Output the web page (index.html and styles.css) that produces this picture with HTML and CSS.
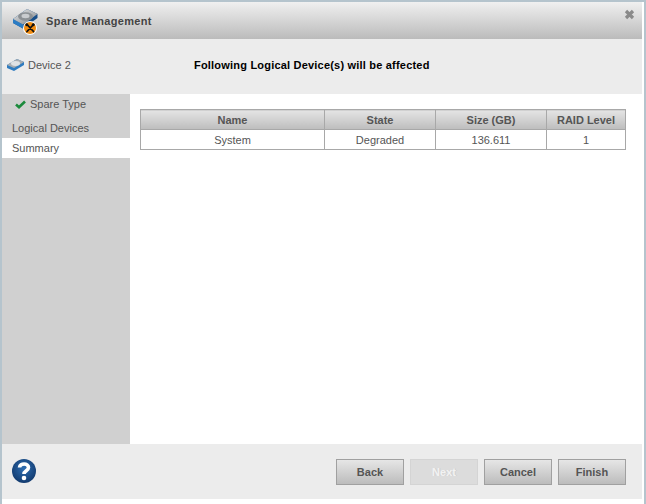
FILE: index.html
```html
<!DOCTYPE html>
<html lang="en">
<head>
<meta charset="utf-8">
<title>Spare Management</title>
<link rel="stylesheet" href="styles.css">
</head>
<body>
<div class="dialog">
  <header class="titlebar">
    <svg class="title-icon" width="25" height="26" viewBox="0 0 25 26">
      <defs>
        <linearGradient id="disk" x1="0" y1="0" x2="1" y2="1">
          <stop offset="0" stop-color="#e8eaec"/>
          <stop offset="1" stop-color="#7f8488"/>
        </linearGradient>
      </defs>
      <path d="M0 10 L14 0 L24.500 5 L24.500 9 L10 19.500 L0 14 Z" fill="#174f8a"/>
      <path d="M0 10 L10 15.500 L10 19.500 L0 14 Z" fill="#2b7cc4"/>
      <path d="M0 10 L14 0 L24.500 5 L10 15.500 Z" fill="url(#disk)"/>
      <ellipse cx="12.500" cy="7.500" rx="7.500" ry="4.200" fill="#8b9094"/>
      <ellipse cx="12.500" cy="7" rx="4" ry="2.200" fill="#c9cccf"/>
      <circle cx="17" cy="19" r="7" fill="#fff"/>
      <circle cx="17" cy="19" r="6" fill="#f28c0f"/>
      <path d="M14 15.500 L20.500 22.500 M20.500 15.500 L14 22.500" stroke="#111" stroke-width="1.800" stroke-linecap="round"/>
      <circle cx="13.800" cy="15.800" r="1.500" fill="#111"/>
      <circle cx="20.200" cy="15.800" r="1.500" fill="#111"/>
    </svg>
    <span class="title-text">Spare Management</span>
    <svg class="close" width="11" height="11" viewBox="0 0 11 11">
      <path d="M2 2 L9 9 M9 2 L2 9" stroke="#8a8a8a" stroke-width="3.2"/>
    </svg>
  </header>
  <section class="subheader">
    <div class="device">
      <svg width="17" height="14" viewBox="0 0 17 14">
        <path d="M0 7 L10 1 L17 4 L17 7 L7 13 L0 10 Z" fill="#2f7cc0"/>
        <path d="M0 7 L10 1 L17 4 L7 10 Z" fill="#a9aeb2"/>
        <ellipse cx="8.500" cy="5.500" rx="4.500" ry="2.400" fill="#dfe2e4"/>
      </svg>
      <span>Device 2</span>
    </div>
    <h1 class="heading">Following Logical Device(s) will be affected</h1>
  </section>
  <div class="body">
    <nav class="side">
      <div class="step step-done">
        <svg width="11" height="9" viewBox="0 0 11 9"><path d="M1 4.500 L4 7.200 L10 1.500" fill="none" stroke="#1b8a3c" stroke-width="2.600"/></svg>
        <span>Spare Type</span>
      </div>
      <div class="step">Logical Devices</div>
      <div class="step step-active">Summary</div>
    </nav>
    <main class="content">
      <table class="grid">
        <colgroup>
          <col class="c1"><col class="c2"><col class="c3"><col class="c4">
        </colgroup>
        <thead>
          <tr><th>Name</th><th>State</th><th>Size (GB)</th><th>RAID Level</th></tr>
        </thead>
        <tbody>
          <tr><td>System</td><td>Degraded</td><td>136.611</td><td>1</td></tr>
        </tbody>
      </table>
    </main>
  </div>
  <footer class="footer">
    <svg class="help" width="26" height="26" viewBox="0 0 26 26">
      <defs>
        <radialGradient id="hg" cx="50%" cy="40%" r="60%">
          <stop offset="0" stop-color="#2f6fb3"/>
          <stop offset="1" stop-color="#123a6e"/>
        </radialGradient>
      </defs>
      <circle cx="13" cy="13" r="12" fill="url(#hg)"/>
      <path d="M8.500 9.500 C8.800 4.800 17.500 4.800 17.500 9.500 C17.500 12.800 13 12.600 13 16" fill="none" stroke="#fff" stroke-width="3.600"/>
      <circle cx="13" cy="20" r="2.300" fill="#fff"/>
    </svg>
    <div class="buttons">
      <button class="btn">Back</button>
      <button class="btn btn-disabled" disabled>Next</button>
      <button class="btn">Cancel</button>
      <button class="btn">Finish</button>
    </div>
  </footer>
</div>
</body>
</html>
```
FILE: styles.css
```css
* { box-sizing: border-box; }
html, body { margin: 0; padding: 0; }
body {
  width: 646px;
  height: 504px;
  overflow: hidden;
  background: #b5c4cd;
  padding: 2px 2px 0 2px;
  font-family: "Liberation Sans", Arial, sans-serif;
  font-size: 11px;
  color: #555;
}
.dialog {
  width: 642px;
  height: 502px;
  background: #fff;
  padding-right: 2px;
  display: flex;
  flex-direction: column;
}
.titlebar {
  height: 37px;
  flex: none;
  display: flex;
  align-items: center;
  background: linear-gradient(#f0f0f0, #bbbbbb);
  padding: 0 7px 0 11px;
}
.title-icon { flex: none; margin-top: 3px; }
.title-text {
  margin-left: 8px;
  font-size: 11px;
  font-weight: bold;
  color: #444;
  letter-spacing: 0.3px;
  flex: 1;
}
.close { flex: none; margin-top: -12px; }
.subheader {
  height: 55px;
  flex: none;
  background: #ececec;
  display: flex;
  align-items: center;
  padding-bottom: 4px;
}
.device {
  width: 128px;
  flex: none;
  display: flex;
  align-items: center;
  gap: 4px;
  padding-left: 5px;
  color: #555;
}
.heading {
  margin: 0 0 0 64px;
  font-size: 11px;
  font-weight: bold;
  color: #000;
  letter-spacing: 0.2px;
}
.body { flex: 1; display: flex; min-height: 0; }
.side { width: 128px; flex: none; background: #d0d0d0; }
.step {
  height: 20px;
  line-height: 20px;
  padding-left: 10px;
  color: #555;
}
.step-done {
  height: 24px;
  line-height: 20px;
  padding-left: 13px;
  padding-bottom: 4px;
  display: flex;
  align-items: center;
  gap: 4px;
}
.step-active { background: #fff; }
.content { flex: 1; padding: 15px 16px 0 10px; background: #fff; }
.grid {
  width: 485px;
  border-collapse: collapse;
  table-layout: fixed;
  border: 1px solid #a8a8a8;
}
.c1 { width: 184px; }
.c2 { width: 111px; }
.c3 { width: 111px; }
.c4 { width: 79px; }
.grid th, .grid td {
  border: 1px solid #a8a8a8;
  padding: 0;
  text-align: center;
  height: 20px;
}
.grid th {
  background: linear-gradient(#e4e4e4, #bdbdbd);
  font-weight: bold;
  color: #555;
}
.grid td { color: #555; }
.footer {
  height: 55px;
  flex: none;
  margin-bottom: 5px;
  background: #ececec;
  display: flex;
  align-items: center;
  justify-content: space-between;
  padding: 0 16px 0 9px;
}
.help { flex: none; margin-top: -1px; }
.buttons { display: flex; gap: 6px; }
.btn {
  width: 68px;
  height: 26px;
  padding: 0;
  border: 1px solid #a0a0a0;
  background: linear-gradient(#e6e6e6, #bcbcbc);
  font-family: inherit;
  font-size: 11px;
  font-weight: bold;
  color: #555;
}
.btn-disabled {
  background: #dcdcdc;
  border-color: #d4d4d4;
  color: #f2f2f2;
  text-shadow: 1px 0 #cfcfcf;
}
```
